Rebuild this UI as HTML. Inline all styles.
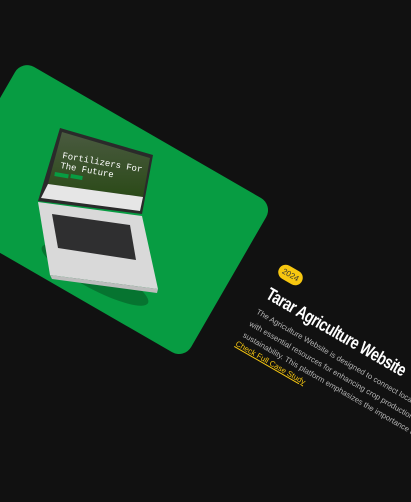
<!DOCTYPE html>
<html><head><style>
html,body{margin:0;padding:0;width:411px;height:502px;overflow:hidden;background:#111111;font-family:"Liberation Sans",sans-serif}
.card{position:absolute;left:22px;top:60px;width:290px;height:178px;background:#079c42;border-radius:14px;transform:rotate(30deg);transform-origin:0 0}
.txt{position:absolute;left:283px;top:262px;transform:rotate(30deg);transform-origin:0 0;width:300px}
.badge{position:absolute;left:0;top:0;background:#f7c710;color:#333;font-size:8px;border-radius:9px;width:26px;height:15px;line-height:15px;text-align:center}
.title{position:absolute;left:2px;top:24px;color:#fff;font-weight:bold;font-size:18px;letter-spacing:-0.6px;white-space:nowrap;transform:scaleX(0.78);transform-origin:0 0}
.p{position:absolute;left:2px;top:49px;color:#b5b5b5;font-size:7.8px;line-height:13.5px;white-space:nowrap}
.link{position:absolute;left:0;top:89px;color:#f7c710;font-size:7.8px;text-decoration:underline;white-space:nowrap}
</style></head><body>
<div class="card"></div>
<svg width="411" height="502" style="position:absolute;left:0;top:0">
<defs><linearGradient id="g" x1="0" y1="0" x2="0" y2="1"><stop offset="0" stop-color="#4a5a40"/><stop offset="1" stop-color="#2b4a18"/></linearGradient></defs>
<ellipse cx="95" cy="275" rx="60" ry="14" fill="#05642a" opacity="0.7" transform="rotate(28 95 275)"/>
<polygon points="60,128 153,155 142,214 38,201" fill="#2a2a2a"/>
<polygon points="62,132 150,158 143,197 48,184" fill="url(#g)"/>
<polygon points="48,184 143,197 140,211 41,198" fill="#e6e6e6"/>
<polygon points="38,202 142,216 158,289 50,275" fill="#d9d9d9"/>
<polygon points="52,214 130,225 136,260 58,248" fill="#2f2f30"/>
<polygon points="50,275 158,289 157,293 52,279" fill="#bdbdbd"/>
<rect x="55" y="172" width="14" height="4" fill="#079c42" transform="rotate(10 55 172)"/>
<rect x="71" y="174" width="12" height="4" fill="#079c42" transform="rotate(10 71 174)"/>
<text x="62" y="158" fill="#fff" font-size="9" transform="rotate(10 62 158)" font-family="Liberation Mono">Fortilizers For</text>
<text x="60" y="168" fill="#fff" font-size="9" transform="rotate(10 60 168)" font-family="Liberation Mono">The Future</text>
</svg>
<div class="txt">
<div class="badge">2024</div>
<div class="title">Tarar Agriculture Website</div>
<div class="p">The Agriculture Website is designed to connect local farmers<br>with essential resources for enhancing crop production and<br>sustainability. This platform emphasizes the importance of</div>
<div class="link">Check Full Case Study</div>
</div>
</body></html>
